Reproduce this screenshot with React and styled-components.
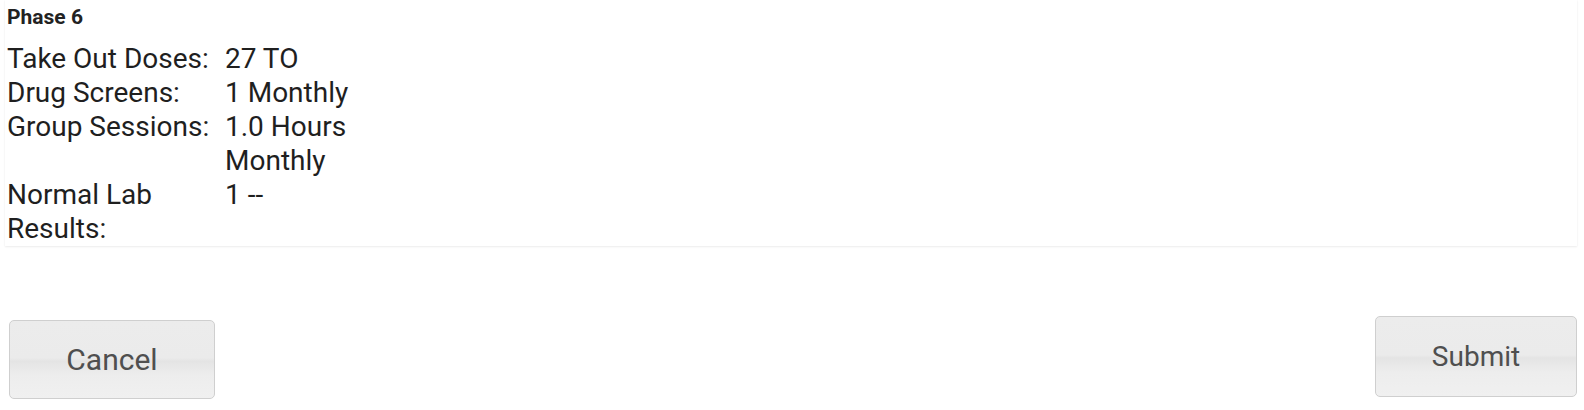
import React from "react";
import styled, { createGlobalStyle } from "styled-components";

const GlobalStyle = createGlobalStyle`
    html, body {
        margin: 0;
        padding: 0;
        background: #ffffff;
        font-family: Roboto, "Liberation Sans", Arial, sans-serif;
        color: #222222;
    }
`;

const Page = styled.div`
    padding: 0 7px 0 5px;
    display: flex;
    flex-direction: column;
`;

const Panel = styled.section`
    background: #ffffff;
    padding: 7px 2px 0 2px;
    box-shadow: 0 1px 2px rgba(0, 0, 0, 0.07), 0 0 1px rgba(0, 0, 0, 0.06);
`;

const Heading = styled.h3`
    margin: 0 0 14px 0;
    font-size: 21px;
    line-height: 21px;
    font-weight: 700;
    color: #222222;
`;

const Details = styled.dl`
    margin: 0;
    display: grid;
    grid-template-columns: 218px 130px;
    font-size: 28px;
    line-height: 34px;
    color: #1f1f1f;
`;

const Label = styled.dt`
    margin: 0;
`;

const Value = styled.dd`
    margin: 0;
`;

const Footer = styled.div`
    display: flex;
    justify-content: space-between;
    align-items: flex-start;
    padding: 70px 0 0 4px;
`;

const Button = styled.button`
    width: ${(p) => p.$width}px;
    height: ${(p) => p.$height}px;
    margin-top: ${(p) => p.$offset || 0}px;
    border: 1px solid #cfcfcf;
    border-radius: 5px;
    background: linear-gradient(
        #ececec 0%,
        #ebebeb 48%,
        #e4e4e4 52%,
        #ededed 70%,
        #f0f0f0 100%
    );
    font-family: Roboto, "Liberation Sans", Arial, sans-serif;
    font-size: ${(p) => p.$size}px;
    color: #4f4f4f;
    cursor: pointer;
    padding: 0;
`;

const rows = [
    { label: "Take Out Doses:", value: "27 TO" },
    { label: "Drug Screens:", value: "1 Monthly" },
    { label: "Group Sessions:", value: "1.0 Hours Monthly" },
    { label: "Normal Lab Results:", value: "1 --" },
];

function App() {
    return (
        <Page>
            <GlobalStyle />
            <Panel>
                <Heading>Phase 6</Heading>
                <Details>
                    {rows.map((r) => (
                        <React.Fragment key={r.label}>
                            <Label>{r.label}</Label>
                            <Value>{r.value}</Value>
                        </React.Fragment>
                    ))}
                </Details>
            </Panel>
            <Footer>
                <Button $width={206} $height={79} $offset={4} $size={30}>
                    Cancel
                </Button>
                <Button $width={202} $height={81} $size={28}>
                    Submit
                </Button>
            </Footer>
        </Page>
    );
}

export default App;
